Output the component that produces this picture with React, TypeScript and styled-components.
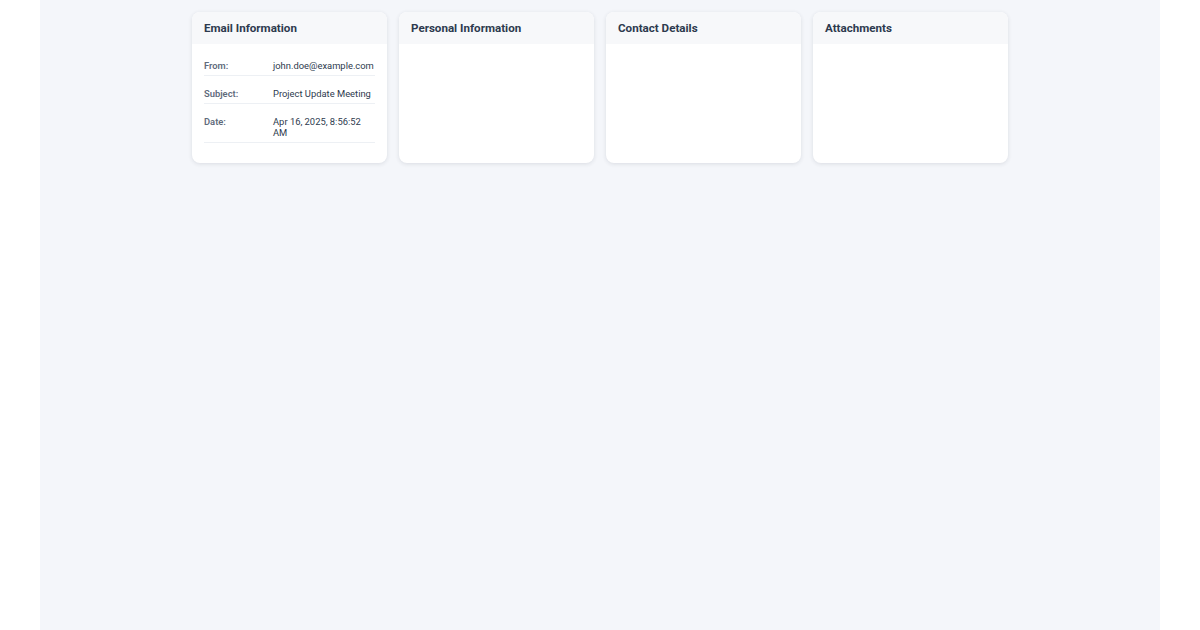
import styled, { createGlobalStyle } from 'styled-components';

const GlobalStyle = createGlobalStyle`
	body {
		margin: 0;
		background: #ffffff;
		font-family: Roboto, 'Noto Sans', sans-serif;
	}
	* {
		box-sizing: border-box;
	}
`;

const Page = styled.main`
	max-width: 1120px;
	min-height: 100vh;
	margin: 0 auto;
	padding: 12px;
	background-color: #f4f6fa;
`;

const CardGrid = styled.section`
	display: grid;
	grid-template-columns: repeat(4, 195px);
	justify-content: center;
	align-items: start;
	gap: 12px;
`;

const Card = styled.article`
	background-color: #ffffff;
	border-radius: 8px;
	box-shadow: 0 1px 4px rgba(30, 41, 59, 0.12);
	overflow: hidden;
	height: 151px;
`;

const CardHeader = styled.header`
	background-color: #f7f8fa;
	padding: 9px 12px;
	font-size: 11.6px;
	line-height: 14px;
	font-weight: 700;
	color: #2d3a4e;
`;

const CardBody = styled.div`
	padding: 12px;
`;

const InfoRow = styled.div`
	display: grid;
	grid-template-columns: 69px 1fr;
	padding: 4px 0;
	margin-bottom: 8px;
	border-bottom: 1px solid #edf0f4;
	font-size: 9.4px;
	line-height: 11px;
`;

const Label = styled.span`
	font-weight: 600;
	color: #5f6b7c;
`;

const Value = styled.span`
	color: #2d3a4e;
`;

const emailInfo = [
	{ label: 'From:', value: 'john.doe@example.com' },
	{ label: 'Subject:', value: 'Project Update Meeting' },
	{ label: 'Date:', value: 'Apr 16, 2025, 8:56:52 AM' },
];

const emptyCards = ['Personal Information', 'Contact Details', 'Attachments'];

function App() {
	return (
		<>
			<GlobalStyle />
			<Page>
				<CardGrid>
					<Card>
						<CardHeader>Email Information</CardHeader>
						<CardBody>
							{emailInfo.map((item) => (
								<InfoRow key={item.label}>
									<Label>{item.label}</Label>
									<Value>{item.value}</Value>
								</InfoRow>
							))}
						</CardBody>
					</Card>
					{emptyCards.map((title) => (
						<Card key={title}>
							<CardHeader>{title}</CardHeader>
							<CardBody />
						</Card>
					))}
				</CardGrid>
			</Page>
		</>
	);
}

export default App;
